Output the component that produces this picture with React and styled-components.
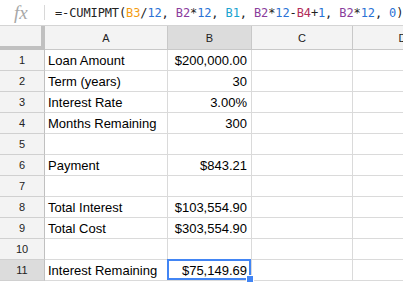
import React from "react";
import styled, { createGlobalStyle } from "styled-components";

const GlobalStyle = createGlobalStyle`
  html, body {
    margin: 0;
    padding: 0;
    background: #fff;
    overflow: hidden;
  }
`;

const columns = ["A", "B", "C", "D"];
const selectedCol = "B";
const selectedRow = 11;

const rows = [
  { label: "Loan Amount", value: "$200,000.00" },
  { label: "Term (years)", value: "30" },
  { label: "Interest Rate", value: "3.00%" },
  { label: "Months Remaining", value: "300" },
  { label: "", value: "" },
  { label: "Payment", value: "$843.21" },
  { label: "", value: "" },
  { label: "Total Interest", value: "$103,554.90" },
  { label: "Total Cost", value: "$303,554.90" },
  { label: "", value: "" },
  { label: "Interest Remaining", value: "$75,149.69" },
];

// formula pieces with their colours
const formula = [
  ["=-CUMIPMT(", "#222"],
  ["B3", "#f39c12"],
  ["/", "#222"],
  ["12", "#2a72d6"],
  [", ", "#222"],
  ["B2", "#8a3c9c"],
  ["*", "#222"],
  ["12", "#2a72d6"],
  [", ", "#222"],
  ["B1", "#1aa3d0"],
  [", ", "#222"],
  ["B2", "#8a3c9c"],
  ["*", "#222"],
  ["12", "#2a72d6"],
  ["-", "#222"],
  ["B4", "#b22d5a"],
  ["+", "#222"],
  ["1", "#2a72d6"],
  [", ", "#222"],
  ["B2", "#8a3c9c"],
  ["*", "#222"],
  ["12", "#2a72d6"],
  [", ", "#222"],
  ["0", "#2a72d6"],
  [")", "#222"],
];

export default function App() {
  return (
    <Sheet>
      <GlobalStyle />
      <FormulaBar>
        <FxIcon>fx</FxIcon>
        <Divider />
        <Formula>
          {formula.map(([text, color], i) => (
            <Token key={i} $color={color}>
              {text}
            </Token>
          ))}
        </Formula>
      </FormulaBar>

      <Grid>
        <Corner />
        {columns.map((c) => (
          <ColHeader key={c} $active={c === selectedCol}>
            {c}
          </ColHeader>
        ))}

        {rows.map((r, i) => {
          const n = i + 1;
          return (
            <React.Fragment key={n}>
              <RowHeader $active={n === selectedRow}>{n}</RowHeader>
              <Cell>{r.label}</Cell>
              <Cell $align="right" $selected={n === selectedRow}>
                {r.value}
                {n === selectedRow && <Handle />}
              </Cell>
              <Cell />
              <Cell />
            </React.Fragment>
          );
        })}
      </Grid>
    </Sheet>
  );
}

const Sheet = styled.div`
  width: 403px;
  height: 282px;
  overflow: hidden;
  background: #fff;
  font-family: "Liberation Sans", Arial, sans-serif;
`;

const FormulaBar = styled.div`
  display: flex;
  align-items: center;
  height: 25px;
  border-bottom: 1px solid #d4d4d4;
  background: #fff;
  overflow: hidden;
`;

const FxIcon = styled.div`
  flex: 0 0 44px;
  padding-left: 14px;
  box-sizing: border-box;
  font-family: "Liberation Serif", "Times New Roman", serif;
  font-style: italic;
  font-size: 19px;
  color: #a8a8a8;
  line-height: 25px;
`;

const Divider = styled.div`
  flex: 0 0 1px;
  height: 15px;
  background: #d8d8d8;
`;

const Formula = styled.div`
  flex: 0 0 auto;
  padding-left: 10px;
  font-family: "DejaVu Sans Mono", "Liberation Mono", monospace;
  font-size: 12px;
  white-space: nowrap;
  letter-spacing: -0.12px;
`;

const Token = styled.span`
  color: ${(p) => p.$color};
`;

const Grid = styled.div`
  display: grid;
  grid-template-columns: 45px 123px 84px 101px 100px;
  grid-template-rows: 24px;
  grid-auto-rows: 21px;
`;

const Corner = styled.div`
  background: #f3f3f3;
  border-right: 4px solid #c0c0c0;
  border-bottom: 4px solid #c0c0c0;
  box-sizing: border-box;
`;

const ColHeader = styled.div`
  box-sizing: border-box;
  display: flex;
  align-items: center;
  justify-content: center;
  background: ${(p) => (p.$active ? "#dcdcdc" : "#f3f3f3")};
  border-right: 1px solid #c8c8c8;
  border-bottom: 1px solid #c8c8c8;
  font-size: 11px;
  color: #222;
`;

const RowHeader = styled.div`
  box-sizing: border-box;
  display: flex;
  align-items: center;
  justify-content: center;
  background: ${(p) => (p.$active ? "#dcdcdc" : "#f3f3f3")};
  border-right: 1px solid #c0c0c0;
  border-bottom: 1px solid #d0d0d0;
  font-size: 11px;
  color: #222;
`;

const Cell = styled.div`
  position: relative;
  box-sizing: border-box;
  display: flex;
  align-items: center;
  justify-content: ${(p) => (p.$align === "right" ? "flex-end" : "flex-start")};
  padding: 0 4px 0 3px;
  border-right: 1px solid #dadada;
  border-bottom: 1px solid #dadada;
  font-size: 13px;
  color: #000;
  white-space: nowrap;

  ${(p) =>
    p.$selected &&
    `
    &::after {
      content: "";
      position: absolute;
      inset: -1px 0 0 -1px;
      border: 2px solid #4285f4;
      pointer-events: none;
    }
  `}
`;

const Handle = styled.span`
  position: absolute;
  right: -3px;
  bottom: -3px;
  width: 6px;
  height: 6px;
  background: #4285f4;
  border: 1px solid #fff;
  z-index: 2;
`;
